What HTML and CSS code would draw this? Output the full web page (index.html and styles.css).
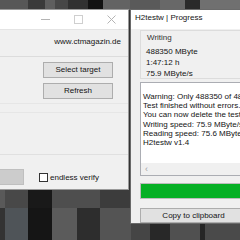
FILE: index.html
```html
<!DOCTYPE html>
<html>
<head>
<meta charset="utf-8">
<link rel="stylesheet" href="styles.css">
</head>
<body>
<div class="desk">
  <div class="win win-left">
    <div class="titlebar">
      <div class="caps">
        <span class="cap"><svg width="9" height="9" viewBox="0 0 9 9"><path d="M0 4.5H9" stroke="#b4b4b4" stroke-width="1"/></svg></span>
        <span class="cap"><svg width="9" height="9" viewBox="0 0 9 9"><rect x="0.5" y="0.5" width="8" height="8" fill="none" stroke="#cfcfcf" stroke-width="1"/></svg></span>
        <span class="cap"><svg width="9" height="9" viewBox="0 0 9 9"><path d="M0.5 0.5L8.5 8.5M8.5 0.5L0.5 8.5" stroke="#b4b4b4" stroke-width="1"/></svg></span>
      </div>
    </div>
    <div class="lbody">
      <div class="url">www.ctmagazin.de</div>
      <div class="sep sep-a"></div>
      <div class="btncol">
        <div class="btn">Select target</div>
        <div class="btn">Refresh</div>
      </div>
      <div class="sep sep-b"></div>
      <div class="sep sep-c"></div>
      <div class="sep sep-d"></div>
      <div class="bottomrow">
        <div class="btn btn-dis"></div>
        <label class="chk"><span class="box"></span>endless verify</label>
      </div>
    </div>
  </div>

  <div class="win win-right">
    <div class="titlebar rtitle">H2testw | Progress</div>
    <div class="rbody">
      <div class="group">
        <div class="glabel">Writing</div>
        <div class="gline">488350 MByte</div>
        <div class="gline">1:47:12 h</div>
        <div class="gline">75.9 MByte/s</div>
      </div>
      <div class="textbox">
        <div class="tlines">
          <div>Warning: Only 488350 of 488352 MByte tested.</div>
          <div>Test finished without errors.</div>
          <div>You can now delete the test files *.h2w or verify them again.</div>
          <div>Writing speed: 75.9 MByte/s</div>
          <div>Reading speed: 75.6 MByte/s</div>
          <div>H2testw v1.4</div>
        </div>
        <div class="hscroll"><span class="arrow">&lsaquo;</span></div>
      </div>
      <div class="progress"></div>
      <div class="btn btn-copy">Copy to clipboard</div>
    </div>
  </div>
</div>
</body>
</html>
```

FILE: styles.css
```css
html, body {
  margin: 0;
  padding: 0;
}
body {
  width: 240px;
  height: 240px;
  overflow: hidden;
  font-family: "Liberation Sans", Arial, sans-serif;
  font-size: 8px;
  color: #141414;
}
.desk {
  position: relative;
  width: 240px;
  height: 240px;
  overflow: hidden;
  background-color: #333;
  background-image:
    linear-gradient(to right, #575757 0 28px, #3a3a3a 28px 45px, #5e5e5e 45px 55px, #474747 55px 68px, #313131 68px 88px, #121212 88px 103px, #636363 103px 130px, #5a5a5a 130px 160px, #686868 160px 185px, #2a2a2a 185px 200px, #707070 200px 240px),
    linear-gradient(to right, #595959 0 5px, #484848 5px 28px, #191919 28px 52px, #4e4e4e 52px 100px, #3c3c3c 100px 131px, #444 131px 240px),
    linear-gradient(to right, #333 0 5px, #4f5458 5px 28px, #151515 28px 52px, #5b5b5b 52px 77px, #2d2d2d 77px 100px, #545454 100px 131px, #454545 131px 150px, #282828 150px 170px, #505050 170px 200px, #262626 200px 205px, #4a4a4a 205px 240px);
  background-size: 240px 10px, 240px 18px, 240px 32px;
  background-position: 0 0, 0 190px, 0 208px;
  background-repeat: no-repeat;
}
.win {
  position: absolute;
  background: #f0f0f0;
  box-sizing: border-box;
  display: flex;
  flex-direction: column;
}
.win-left {
  left: -10px;
  top: 9px;
  width: 139px;
  height: 181px;
  border: 1px solid #9a9a9a;
}
.win-right {
  left: 130px;
  top: 9px;
  width: 123px;
  height: 215px;
  border: 1px solid #6a6a6a;
}
.titlebar {
  height: 19px;
  background: #fff;
  flex: none;
  box-sizing: border-box;
}
.caps {
  display: flex;
  justify-content: flex-end;
  height: 100%;
}
.cap {
  width: 33px;
  display: flex;
  align-items: center;
  justify-content: center;
}
.lbody {
  flex: 1;
  display: flex;
  flex-direction: column;
  border-top: 1px solid #e4e4e4;
}
.url {
  text-align: right;
  padding: 7px 7px 0 0;
  height: 14px;
  line-height: 9px;
}
.sep {
  height: 1px;
  background: #dcdcdc;
}
.sep-a { margin-top: 5px; }
.btncol {
  display: flex;
  flex-direction: column;
  gap: 5px;
  padding: 5px 0 0 52px;
}
.btn {
  box-sizing: border-box;
  height: 16px;
  background: #e1e1e1;
  border: 1px solid #adadad;
  display: flex;
  align-items: center;
  justify-content: center;
  line-height: 1;
}
.btncol .btn { width: 70px; }
.sep-b { margin-top: 4px; background: #e6e6e6; }
.sep-c { margin-top: 8px; background: #e6e6e6; }
.sep-d { margin-top: 41px; background: #e0e0e0; }
.bottomrow {
  display: flex;
  align-items: center;
  margin-top: 14px;
}
.btn-dis {
  width: 33px;
  height: 16px;
  background: #cccccc;
  border-color: #bfbfbf;
}
.chk {
  display: flex;
  align-items: center;
  margin-left: 15px;
  gap: 2px;
}
.box {
  width: 9px;
  height: 9px;
  border: 1px solid #333;
  background: #fff;
  box-sizing: border-box;
}
.rtitle {
  padding: 3px 0 0 4px;
  font-size: 8px;
  line-height: 10px;
}
.rbody {
  flex: 1;
  display: flex;
  flex-direction: column;
  padding: 0 0 0 9px;
  overflow: hidden;
}
.group {
  margin-top: 1px;
  border: 1px solid #dcdcdc;
  border-right: none;
  padding: 1px 0 2px 5px;
  height: 49px;
  box-sizing: border-box;
  line-height: 11px;
}
.glabel { margin-left: 1px; margin-bottom: 3px; color: #333; }
.gline { white-space: nowrap; }
.textbox {
  margin-top: 3px;
  background: #fff;
  border: 1px solid #abadb3;
  border-right: none;
  height: 95px;
  box-sizing: border-box;
  display: flex;
  flex-direction: column;
  overflow: hidden;
}
.tlines {
  flex: 1;
  padding: 9px 0 0 2px;
  line-height: 9.2px;
  white-space: nowrap;
}
.hscroll {
  height: 12px;
  background: #f0f0f0;
  display: flex;
  align-items: center;
  padding-left: 4px;
  color: #a0a0a0;
  font-size: 9px;
}
.progress {
  margin-top: 7px;
  height: 16px;
  background: #06b025;
  border: 1px solid #bcbcbc;
  border-right: none;
  box-sizing: border-box;
}
.btn-copy {
  margin-top: 9px;
  width: 107px;
  height: 15px;
}
```
